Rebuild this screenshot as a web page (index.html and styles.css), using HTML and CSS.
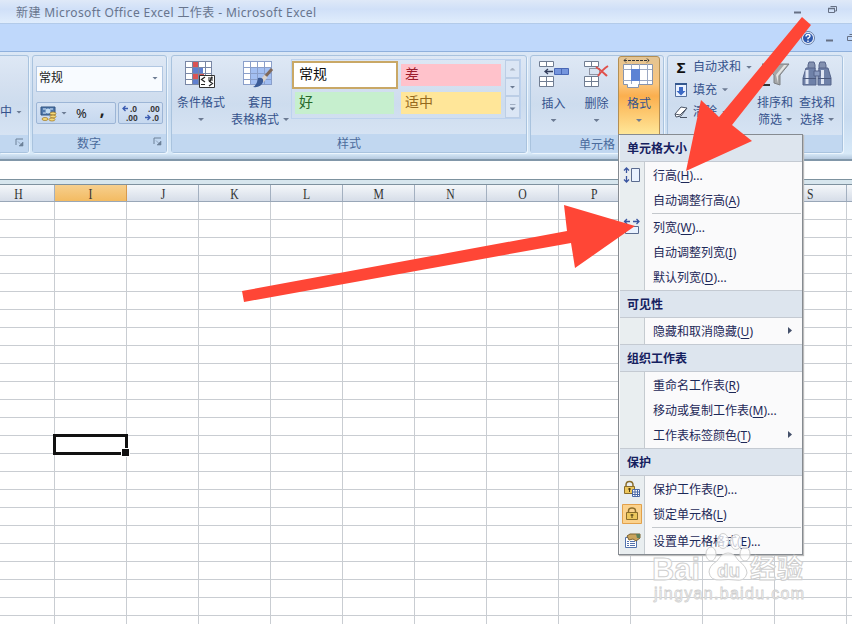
FILE: index.html
```html
<!DOCTYPE html>
<html lang="zh-CN">
<head>
    <meta charset="UTF-8">
    <meta name="viewport" content="width=device-width, initial-scale=1.0">
    <title>Microsoft Excel</title>
    <link rel="stylesheet" href="styles.css">
</head>
<body>

    <div class="window">
        <div class="titlebar">
            <span class="title">新建 Microsoft Office Excel 工作表 - Microsoft Excel</span>
            <svg class="title-buttons" width="60" height="23">
                <path d="M2 12.500h7" stroke="#667084" stroke-width="2"/>
                <path d="M38.500 6.500h6v4.500h-2M36.500 8.500h6v4h-6z" fill="none" stroke="#667084"/>
                <path d="M36 8.500h7" stroke="#667084" stroke-width="1.500"/>
            </svg>
        </div>

        <div class="tabstrip">
            <svg width="52" height="28">
                <circle cx="8" cy="14" r="6.500" fill="#e8f1ff" stroke="#6a7fa5"/>
                <circle cx="8" cy="14" r="5" fill="#3059ad"/>
                <path d="M6 12.500q0-2 2-2t2 1.700q0 1-2 2v1M8 16.500v1.500" fill="none" stroke="#fff" stroke-width="1.400"/>
                <path d="M26 16.500h7" stroke="#667084" stroke-width="2"/>
                <path d="M49.500 10.500h4M47.500 12.500h6v4h-6z" fill="none" stroke="#667084"/>
            </svg>
        </div>

        <div class="ribbon">
            <div class="group group-align">
                <div class="group-body"><span>中</span><i class="caret"></i></div>
                <div class="group-label"><svg class="launcher" width="9" height="9"><path d="M1 7V1h7" fill="none" stroke="#6d8199"/><path d="M3 3.500l3 3M8 4v4H4z" fill="#6d8199" stroke="#6d8199" stroke-width=".6"/></svg></div>
            </div>

            <div class="group group-number">
                <div class="group-body">
                    <div class="combo"><span>常规</span><i class="caret"></i></div>
                    <div class="button-row">
                        <div class="mini-group mini-wide">
                            <svg width="17" height="17">
                                <path d="M1 2h14v8H1z" fill="#4f79ae" stroke="#31537f"/>
                                <path d="M3 4h3M10 4h3M3 8h3" stroke="#dcebfa"/>
                                <circle cx="8" cy="6" r="2.500" fill="#c2dcf2"/>
                                <ellipse cx="13" cy="8.500" rx="3" ry="1.500" fill="#f4d97a" stroke="#9d7420" stroke-width=".7"/>
                                <ellipse cx="13" cy="11.500" rx="3" ry="1.500" fill="#f4d97a" stroke="#9d7420" stroke-width=".7"/>
                                <ellipse cx="12" cy="14.500" rx="3" ry="1.500" fill="#f4d97a" stroke="#9d7420" stroke-width=".7"/>
                                <ellipse cx="5" cy="14" rx="3" ry="1.500" fill="#f4d97a" stroke="#9d7420" stroke-width=".7"/>
                            </svg>
                            <i class="caret"></i>
                            <span class="percent">%</span>
                            <span class="comma">,</span>
                        </div>
                        <div class="mini-group mini-dec">
                            <svg width="40" height="18">
                                <path d="M1 4.500h5M3.500 2L1 4.500 3.500 7M23 13.500h5M25.500 11l2.500 2.500-2.500 2.500" fill="none" stroke="#3b5bb0" stroke-width="1.300"/>
                                <g class="dec-text"><text x="8" y="8">.0</text><text x="4" y="17">.00</text><text x="26" y="8">.00</text><text x="30" y="17">.0</text></g>
                            </svg>
                        </div>
                    </div>
                </div>
                <div class="group-label"><span>数字</span><svg class="launcher" width="9" height="9"><path d="M1 7V1h7" fill="none" stroke="#6d8199"/><path d="M3 3.500l3 3M8 4v4H4z" fill="#6d8199" stroke="#6d8199" stroke-width=".6"/></svg></div>
            </div>

            <div class="group group-style">
                <div class="group-body">
                    <div class="big-button cond">
                        <svg width="36" height="32">
                            <path d="M2 3h27v24H2z" fill="#fff"/>
                            <path d="M9 3h6v6H9zM9 15h12v6H9z" fill="#d95354"/>
                            <path d="M9 9h11v6H9zM9 21h7v6H9z" fill="#5f7fd0"/>
                            <path d="M2.500 3v24M9.500 3v24M15.500 3v24M22.500 3v24M28.500 3v24M2 3.500h27M2 9.500h27M2 15.500h27M2 21.500h27M2 26.500h27" stroke="#7987a5" fill="none"/>
                            <path d="M16.500 17.500h15v12h-15z" fill="#fff" stroke="#333"/>
                            <path d="M22 19l-3.500 2.500 3.500 2.500M18 26.500h4M26 23l3.500 2.500-3.500 2.500M25 20h5M25 22h5M29 18.500l-2 5" fill="none" stroke="#222" stroke-width="1.200"/>
                        </svg>
                        <span>条件格式</span>
                        <i class="caret"></i>
                    </div>
                    <div class="big-button table-format">
                        <svg width="38" height="32">
                            <path d="M2 3h28v24H2z" fill="#fff"/>
                            <path d="M9 9h21v18H9z" fill="#a3bff2"/>
                            <path d="M2.500 3v24M9.500 3v24M16.500 3v24M23.500 3v24M30.500 3v24M2 3.500h28M2 9.500h28M2 15.500h28M2 21.500h28M2 26.500h28" stroke="#8a9fca" fill="none"/>
                            <path d="M31 11L23 20" stroke="#80695a" stroke-width="3"/>
                            <path d="M25 18l-4 5" stroke="#d9d2cc" stroke-width="4"/>
                            <path d="M17 20q6-1 5 4-2 6-10 5 4-2 5-9z" fill="#3c5c98"/>
                        </svg>
                        <span>套用</span>
                        <span>表格格式 <i class="caret"></i></span>
                    </div>
                    <div class="gallery">
                        <div class="cells">
                            <div class="style-cell normal">常规</div>
                            <div class="style-cell bad">差</div>
                            <div class="style-cell good">好</div>
                            <div class="style-cell neutral">适中</div>
                        </div>
                        <div class="scroller">
                            <span><i class="caret up"></i></span>
                            <span><i class="caret"></i></span>
                            <span><i class="caret more"></i></span>
                        </div>
                    </div>
                </div>
                <div class="group-label"><span>样式</span></div>
            </div>

            <div class="group group-cells">
                <div class="group-body">
                    <div class="big-button insert">
                        <svg width="32" height="32">
                            <path d="M1.500 3.500h14v5h-14zM8.500 3v5M1.500 18.500h14v10h-14zM8.500 18v10M1 23.500h14" fill="#fff" stroke="#707d92"/>
                            <path d="M16.500 10.500h14v6h-14zM23.500 10v6" fill="#7595dd" stroke="#4967b5"/>
                            <path d="M7 13.500h8M10 11l-3 2.500 3 2.500" fill="none" stroke="#333d5c" stroke-width="1.300"/>
                        </svg>
                        <span>插入</span>
                        <i class="caret"></i>
                    </div>
                    <div class="big-button delete">
                        <svg width="32" height="32">
                            <path d="M3.500 3.500h14v5h-14zM10.500 3v5M3.500 18.500h14v10h-14zM10.500 18v10M3 23.500h14" fill="#fff" stroke="#707d92"/>
                            <path d="M8.500 10.500h10v6h-10z" fill="none" stroke="#445" stroke-dasharray="1 1"/>
                            <path d="M15 9q5 3 11 9M27 8q-5 3-10 10" fill="none" stroke="#e0504b" stroke-width="2"/>
                        </svg>
                        <span>删除</span>
                        <i class="caret"></i>
                    </div>
                    <div class="big-button format active">
                        <svg width="34" height="32">
                            <path d="M2 2.500h25M4 .5l-2 2 2 2M25 .5l2 2-2 2" stroke="#333" fill="none" stroke-dasharray="3 1"/>
                            <path d="M1.500 6.500h29v20h-14v3h-11v-3h-4z" fill="#fff" stroke="#8794ad"/>
                            <path d="M1 11.500h29M1 22.500h29M9.500 6v20M17.500 6v20M25.500 6v20" stroke="#9ca9c3"/>
                            <path d="M9 11h9v12H9z" fill="#5d83d4"/>
                        </svg>
                        <span>格式</span>
                        <i class="caret"></i>
                    </div>
                </div>
                <div class="group-label"><span>单元格</span></div>
            </div>

            <div class="group group-edit">
                <div class="group-body">
                    <div class="edit-list">
                        <div><b class="sigma">Σ</b><span>自动求和</span><i class="caret"></i></div>
                        <div>
                            <svg width="14" height="16"><path d="M1.500 1.500h11v13h-11z" fill="#eaf2ff" stroke="#55719f"/><path d="M1 2h12" stroke="#34588f" stroke-width="2"/><path d="M5 5h4v4h2.500L7 13.500 2.500 9H5z" fill="#3d6ac4"/></svg>
                            <span>填充</span><i class="caret"></i>
                        </div>
                        <div>
                            <svg width="14" height="14"><path d="M1 9l6-7 6 1-6 8-5 1z" fill="#fff" stroke="#4c5667"/><path d="M1 9l5 1 7-7M6 12.500h7" stroke="#4c5667" fill="none"/></svg>
                            <span>清除</span><i class="caret"></i>
                        </div>
                    </div>
                    <div class="big-button sort">
                        <svg width="32" height="32">
                            <path d="M3 27L10 16M4 27h7" stroke="#333" stroke-width="2"/>
                            <path d="M3 6h27L21 17v10l-6-2v-8z" fill="#a5a7a8" stroke="#7d8083"/>
                            <path d="M17 17l8-10h3l-9 11v7" fill="#e3e4e2"/>
                        </svg>
                        <span>排序和</span>
                        <span>筛选 <i class="caret"></i></span>
                    </div>
                    <div class="big-button find">
                        <svg width="30" height="32">
                            <path d="M6 7l1-3h5l1 3v4H6zM17 7l1-3h5l1 3v4h-7z" fill="#8391b0" stroke="#56648a"/>
                            <path d="M4 10h9l1 10v7H1v-7zM17 10h9l3 10v7H16v-7z" fill="#6f81a8" stroke="#56648a"/>
                            <path d="M5 12v14M20.500 12v14" stroke="#dfe6f4" stroke-width="3"/>
                            <path d="M12 13h6v5h-6z" fill="#8a9bc0" stroke="#56648a"/>
                            <path d="M1 20.500h13M16 20.500h13" stroke="#4a587c"/>
                        </svg>
                        <span>查找和</span>
                        <span>选择 <i class="caret"></i></span>
                    </div>
                </div>
                <div class="group-label"></div>
            </div>
        </div>

        <div class="formula-bar"></div>

        <div class="column-heads">
            <span class="first"><b>H</b></span>
            <span class="selected"><b>I</b></span>
            <span><b>J</b></span>
            <span><b>K</b></span>
            <span><b>L</b></span>
            <span><b>M</b></span>
            <span><b>N</b></span>
            <span><b>O</b></span>
            <span><b>P</b></span>
            <span><b>Q</b></span>
            <span><b>R</b></span>
            <span><b>S</b></span>
        </div>

        <div class="sheet"><div class="active-cell"></div></div>
    </div>

    <div class="menu">
        <div class="menu-head">单元格大小</div>
        <div class="menu-section">
            <div class="item">
                <svg width="18" height="18"><path d="M3.500 2v5M1 4.500L3.500 2 6 4.500M3.500 10v6M1 13.500L3.500 16 6 13.500" fill="none" stroke="#3a55a0" stroke-width="1.300"/><path d="M8.500 2.500h8v13h-8z" fill="#e9f2ff" stroke="#5a6b8f"/></svg>
                <span>行高(<u>H</u>)...</span>
            </div>
            <div class="item"><span>自动调整行高(<u>A</u>)</span></div>
            <div class="line"></div>
            <div class="item">
                <svg width="18" height="18"><path d="M1 3.500h6M4 1L1.500 3.500 4 6M10 3.500h6M13.500 1L16 3.500 13.500 6" fill="none" stroke="#3a55a0" stroke-width="1.300"/><path d="M2.500 8.500h13v7h-13z" fill="#e9f2ff" stroke="#5a6b8f"/></svg>
                <span>列宽(<u>W</u>)...</span>
            </div>
            <div class="item"><span>自动调整列宽(<u>I</u>)</span></div>
            <div class="item"><span>默认列宽(<u>D</u>)...</span></div>
        </div>
        <div class="menu-head">可见性</div>
        <div class="menu-section">
            <div class="item sub"><span>隐藏和取消隐藏(<u>U</u>)</span></div>
        </div>
        <div class="menu-head">组织工作表</div>
        <div class="menu-section">
            <div class="item"><span>重命名工作表(<u>R</u>)</span></div>
            <div class="item"><span>移动或复制工作表(<u>M</u>)...</span></div>
            <div class="item sub"><span>工作表标签颜色(<u>T</u>)</span></div>
        </div>
        <div class="menu-head">保护</div>
        <div class="menu-section">
            <div class="item">
                <svg width="18" height="18"><path d="M3 7V5q0-3.500 3.500-3.500T10 5v2" fill="none" stroke="#8a6d2a" stroke-width="1.500"/><path d="M1.500 6.500h10v7h-10z" fill="#edc75c" stroke="#8a6d2a"/><path d="M6.500 8v4M5 9h3" stroke="#4d3b10"/><path d="M9.500 9.500h7v7h-7zM9 12h8M9 14.500h8M12 9v7M14.500 9v7" fill="#fff" stroke="#4a69a6"/></svg>
                <span>保护工作表(<u>P</u>)...</span>
            </div>
            <div class="item checked">
                <svg width="20" height="20"><path d="M.5.500h19v19H.5z" fill="#fbd28c" stroke="#e2a14b"/><path d="M6.500 9V7q0-3 3.500-3t3.500 3v2" fill="none" stroke="#8a6d2a" stroke-width="1.500"/><path d="M4.500 8.500h11v7h-11z" fill="#edc75c" stroke="#8a6d2a"/><path d="M10 10v4M8.500 11h3" stroke="#4d3b10"/></svg>
                <span>锁定单元格(<u>L</u>)</span>
            </div>
            <div class="line"></div>
            <div class="item">
                <svg width="18" height="18"><path d="M2.500 5.500h11v10h-11z" fill="#fff" stroke="#5272ad"/><path d="M4 9.500h2M7 9.500h5M4 11.500h2M7 11.500h5M4 13.500h2M7 13.500h5" stroke="#5272ad"/><path d="M4 4l3-2h10v4l-4 3-3-2-4 1z" fill="#c9a45c" stroke="#7b6231"/><path d="M13 2h4v4h-3z" fill="#5d7f5a"/></svg>
                <span>设置单元格格式(<u>E</u>)...</span>
            </div>
        </div>
    </div>

    <!-- logo mark over the lower right corner -->
    <svg class="watermark" width="170" height="85">
        <g class="brand">
            <text x="7" y="55" textLength="48" lengthAdjust="spacingAndGlyphs">Bai</text>
            <text x="105" y="53" class="cn" textLength="53">经验</text>
            <ellipse cx="66" cy="29" rx="5" ry="7"/><ellipse cx="78" cy="16" rx="5.500" ry="7.500"/><ellipse cx="91" cy="17" rx="5.500" ry="7.500"/><ellipse cx="100" cy="29" rx="5" ry="7"/>
            <path d="M83 28q6 0 10 7 9 7 9 13-2 9-12 7-7-1-14 0-11 1-12-8 0-6 8-11 5-8 11-8z"/>
            <text x="72" y="52" class="du">du</text>
        </g>
        <text x="9" y="74" class="url" textLength="150">jingyan.baidu.com</text>
    </svg>

    <svg class="arrows" width="852" height="624">
        <path d="M802 17l9 8-79 100 20 16-66 30 15-71 18 17z"/>
        <path d="M242 291L567 231 564 205 635 226 575 268 571 243 244 302z"/>
    </svg>

</body>
</html>
```
FILE: styles.css
```css
* {
    margin: 0;
    padding: 0;
    box-sizing: border-box;
}

body {
    width: 852px;
    height: 624px;
    overflow: hidden;
    position: relative;
    background-color: #fff;
    font-family: "Noto Sans", "Noto Sans CJK SC", sans-serif;
    font-size: 12px;
    line-height: 16px;
    color: #35528c;
}

svg {
    display: block;
    flex: none;
}

.window {
    display: flex;
    flex-direction: column;
    height: 624px;
}

/* Title bar */
.titlebar {
    display: flex;
    justify-content: space-between;
    height: 24px;
    padding: 5px 0 0 16px;
    background: linear-gradient(#dfe9f8, #d0e0f8 40%, #e0edfc);
    border-bottom: 1px solid #b3cbe9;
    color: #68758d;
}

.title {
    letter-spacing: 0.39px;
    white-space: nowrap;
}

.title-buttons {
    margin-top: -5px;
}

.tabstrip {
    display: flex;
    justify-content: flex-end;
    height: 28px;
    background-color: #bfd8fb;
    border-bottom: 1px solid #8fb0dc;
}

/* Ribbon */
.ribbon {
    display: flex;
    gap: 4px;
    height: 109px;
    padding: 3px 0 6px;
    background: linear-gradient(#dbe7f5, #c8dbf0 60%, #d7e9f8 95%, #b5c9df);
    border-bottom: 2px solid #8197a9;
}

.group {
    display: flex;
    flex: none;
    flex-direction: column;
    border: 1px solid #a9c3de;
    border-radius: 3px;
    background: linear-gradient(#dee8f5, #d4e0f0 30%, #cddcee 50%, #dbe7f6);
    box-shadow: 1px 1px 0 #ecf5fd;
}

.group-body {
    display: flex;
    height: 79px;
}

.group-label {
    display: flex;
    flex: 1;
    align-items: center;
    justify-content: center;
    background-color: #c1d7f0;
    color: #4b6b9c;
}

.group-label span {
    padding-top: 2px;
}

.caret {
    display: inline-block;
    flex: none;
    width: 6px;
    height: 3px;
    background-color: #6c7b93;
    clip-path: polygon(0 0, 100% 0, 50% 100%);
}

.caret.up {
    background-color: #a9b3c4;
    clip-path: polygon(0 100%, 100% 100%, 50% 0);
}

.caret.more {
    height: 7px;
    clip-path: polygon(0 0, 100% 0, 100% 1px, 0 1px, 0 4px, 100% 4px, 50% 100%, 0 4px);
}

.group-align {
    width: 29px;
    border-left: 0;
    border-radius: 0 3px 3px 0;
}

.group-align .group-body {
    align-items: center;
    padding-top: 33px;
    gap: 4px;
}

.group-align .group-label {
    justify-content: flex-end;
    padding-right: 4px;
}

.launcher {
    margin-top: -3px;
}

.group-number {
    width: 135px;
    margin-left: -1px;
}

.group-number .group-body {
    flex-direction: column;
    gap: 10px;
    padding: 10px 3px 0;
}

.combo {
    display: flex;
    align-items: center;
    justify-content: space-between;
    height: 26px;
    padding: 0 4px 2px 2px;
    background-color: #f8fbff;
    border: 1px solid #b1c7e2;
    color: #222;
}

.button-row {
    display: flex;
    justify-content: space-between;
}

.mini-group {
    display: flex;
    align-items: center;
    height: 22px;
    border: 1px solid #9cb5d6;
    border-radius: 2px;
    background: linear-gradient(#d6e3f4, #c6d8ef);
    color: #222;
}

.mini-wide {
    width: 80px;
    padding-left: 3px;
}

.mini-wide .caret {
    margin: 0 9px 0 4px;
}

.mini-dec {
    width: 45px;
    padding-left: 3px;
}

.percent {
    font-size: 13px;
}

.comma {
    margin-left: 13px;
    margin-top: -7px;
    font-size: 17px;
    font-weight: bold;
}

.dec-text {
    font: bold 8.5px "Liberation Sans", sans-serif;
    fill: #333;
}

.group-number .group-label {
    justify-content: flex-end;
    gap: 52px;
    padding-right: 4px;
}

.group-style {
    width: 356px;
}

.big-button {
    display: flex;
    flex: none;
    flex-direction: column;
    align-items: center;
    padding-top: 2px;
    white-space: nowrap;
}

.big-button > span {
    line-height: 17px;
}

.big-button svg {
    margin-bottom: 4px;
}

.big-button > .caret {
    margin-top: 7px;
}

.big-button span .caret {
    margin-left: 1px;
    vertical-align: 3px;
}

.cond {
    width: 56px;
    margin-left: 1px;
}

.table-format {
    width: 62px;
}

.gallery {
    display: flex;
    height: 60px;
    margin-top: 3px;
    border: 1px solid #bdd2ee;
}

.cells {
    display: grid;
    grid-template-columns: 106px 107px;
    grid-template-rows: 29px 28px;
}

.style-cell {
    height: 22px;
    margin: 4px 4px 0 3px;
    padding: 0 0 0 4px;
    font-size: 14px;
    line-height: 19px;
}

.normal {
    height: 28px;
    margin: 1px 0 0 0;
    padding: 1px 0 0 5px;
    background-color: #fff;
    border: 2px solid #c9a866;
    color: #111;
}

.bad {
    background-color: #ffc2cb;
    color: #9c1c2c;
}

.good {
    margin-top: 3px;
    background-color: #c6efce;
    color: #27692a;
}

.neutral {
    margin-top: 3px;
    background-color: #ffe699;
    color: #94691c;
}

.scroller {
    display: grid;
    width: 15px;
}

.scroller span {
    display: flex;
    align-items: center;
    justify-content: center;
    border: 1px solid #bccee6;
    background-color: #dbe6f5;
}

.group-cells {
    width: 134px;
    margin-left: -1px;
}

.insert,
.delete {
    width: 43px;
}

.insert {
    margin-left: 1px;
}

.group-cells .big-button > span {
    margin-top: 1px;
}

.format {
    width: 42px;
    height: 80px;
}

.active {
    background: linear-gradient(#e3c493, #fbc57b 35%, #fbaf4e 50%, #ffe89a);
    border: 1px solid #b38f54;
    border-radius: 3px 3px 0 0;
    padding-top: 1px;
}

.group-edit {
    width: 176px;
    margin-left: -1px;
}

.edit-list {
    width: 86px;
    padding: 0 0 0 6px;
}

.edit-list div {
    display: flex;
    align-items: center;
    height: 22.5px;
    gap: 5px;
    white-space: nowrap;
}

.sigma {
    width: 14px;
    color: #111;
    font-size: 15px;
    text-align: center;
}

.sort,
.find {
    width: 42px;
}

/* Formula bar and column headings */
.formula-bar {
    height: 23px;
    background: linear-gradient(#fff 18px, #7d929f 18px, #7d929f 19px, #d7e6ee 19px);
}

.column-heads {
    display: flex;
    height: 18px;
    border-top: 1px solid #7e919f;
    border-bottom: 1px solid #99a7b8;
    background: linear-gradient(#f4f7fa, #d6dde8);
}

.column-heads span {
    flex: none;
    width: 72px;
    border-right: 1px solid #a3b0c0;
    text-align: center;
    line-height: 19px;
}

.column-heads b {
    display: inline-block;
    font: 15px/19px "Liberation Serif", serif;
    color: #333;
    transform: scaleX(0.78);
}

.column-heads .first {
    width: 55px;
    padding-right: 18px;
}

.column-heads .selected {
    background: linear-gradient(#f6cf8e, #f3bb62);
    border-color: #d79a4d;
}

.sheet {
    flex: 1;
    position: relative;
    background-image: linear-gradient(#c9cdd2 1px, transparent 1px), linear-gradient(90deg, #c9cdd2 1px, transparent 1px);
    background-size: 72px 18px;
    background-position: 54px 17px;
}

.active-cell {
    position: absolute;
    left: 53px;
    top: 232px;
    width: 75px;
    height: 21px;
    border: 3px solid #111;
}

.active-cell::after {
    content: "";
    position: absolute;
    right: -5px;
    bottom: -5px;
    width: 7px;
    height: 7px;
    background-color: #111;
    border: 1px solid #fff;
}

/* Format drop-down */
.menu {
    position: absolute;
    left: 618px;
    top: 134px;
    width: 185px;
    height: 421px;
    padding-left: 1px;
    background-color: #fafafb;
    border: 1px solid #868b91;
    box-shadow: 1px 1px 1px #bbb;
    color: #1d2858;
}

.menu-head {
    height: 28px;
    padding-left: 7px;
    background-color: #dde5ee;
    border-top: 1px solid #c4cad2;
    border-bottom: 1px solid #c4cad2;
    color: #15205f;
    font-weight: bold;
    line-height: 27px;
}

.menu-head:first-child {
    height: 27px;
    border-top: 0;
}

.menu-section {
    padding-bottom: 1px;
    background: linear-gradient(90deg, #e9eef0 24px, #c5cbd0 24px, #c5cbd0 25px, #fafafb 25px);
}

.item {
    display: grid;
    grid-template-columns: 24px 1fr 14px;
    align-items: center;
    height: 25px;
    white-space: nowrap;
}

.item svg {
    justify-self: center;
}

.item span {
    grid-column: 2;
    padding: 2px 0 0 9px;
}

.item u {
    text-underline-offset: 2px;
}

.sub::after {
    content: "";
    width: 4px;
    height: 7px;
    background-color: #44506a;
    clip-path: polygon(0 0, 100% 50%, 0 100%);
}

.line {
    height: 2px;
    margin: 0 1px 0 32px;
    border-bottom: 1px solid #c4c8cc;
}

/* Overlays */
.watermark {
    position: absolute;
    left: 645px;
    top: 525px;
}

.brand {
    font: bold 32px "Liberation Sans", sans-serif;
    fill: #fff;
    fill-opacity: 0.75;
    stroke: #cfcfcf;
    stroke-width: 1px;
}

.brand .cn {
    font: bold 26px "Noto Sans CJK SC", sans-serif;
}

.brand .du {
    font-size: 19px;
}

.url {
    font: 16px "Liberation Sans", sans-serif;
    fill: #fff;
    stroke: #cfcfcf;
    stroke-width: 0.8px;
}

.arrows {
    position: absolute;
    left: 0;
    top: 0;
    fill: #ff4636;
}
```
